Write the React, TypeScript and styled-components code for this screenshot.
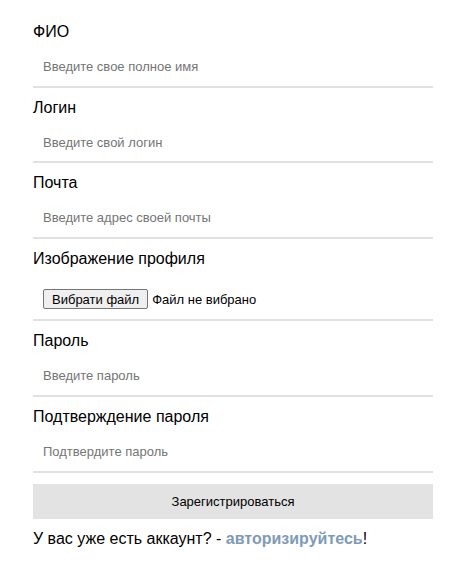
import React, { useState } from 'react';
import styled, { createGlobalStyle } from 'styled-components';

const GlobalStyle = createGlobalStyle`
  body {
    margin: 0;
    background: #fff;
    font-family: "Liberation Sans", Arial, sans-serif;
    color: #000;
  }
`;

const Form = styled.form`
  width: 400px;
  padding: 23px 0 0 33px;
  display: flex;
  flex-direction: column;
`;

const Field = styled.div`
  display: flex;
  flex-direction: column;
  margin-bottom: 11px;
`;

const Label = styled.label`
  font-size: 16px;
  line-height: 18.6px;
  margin-bottom: 6px;
`;

const Input = styled.input`
  box-sizing: border-box;
  width: 100%;
  height: 40px;
  padding: 0 10px;
  border: none;
  border-bottom: 2px solid #e1e1e1;
  outline: none;
  font-family: "Liberation Sans", Arial, sans-serif;
  font-size: 13px;
  color: #000;
  background: transparent;

  &::placeholder {
    color: #757575;
  }
`;

const FileRow = styled.div`
  box-sizing: border-box;
  height: 47px;
  padding: 5px 10px 0;
  display: flex;
  align-items: center;
  gap: 4px;
  border-bottom: 2px solid #e1e1e1;
  font-size: 13px;
`;

const HiddenFile = styled.input`
  display: none;
`;

const FileButton = styled.label`
  box-sizing: border-box;
  height: 20px;
  padding: 0 8px;
  display: inline-flex;
  align-items: center;
  border: 1px solid #767676;
  border-radius: 2px;
  background: #efefef;
  font-size: 13px;
  color: #000;
  cursor: default;
`;

const FileName = styled.span`
  font-size: 13px;
`;

const Submit = styled.button`
  margin-top: 0;
  height: 35px;
  border: none;
  background: #e3e3e3;
  font-family: "Liberation Sans", Arial, sans-serif;
  font-size: 13px;
  color: #000;
  cursor: pointer;
`;

const Footer = styled.p`
  margin: 11px 0 0;
  font-size: 16px;
  line-height: 18.6px;
`;

const Link = styled.a`
  color: #7e9ab8;
  font-weight: bold;
  text-decoration: none;
`;

const fields = [
  { id: 'fio', label: 'ФИО', placeholder: 'Введите свое полное имя', type: 'text' },
  { id: 'login', label: 'Логин', placeholder: 'Введите свой логин', type: 'text' },
  { id: 'email', label: 'Почта', placeholder: 'Введите адрес своей почты', type: 'email' },
  { id: 'avatar', label: 'Изображение профиля', placeholder: '', type: 'file' },
  { id: 'password', label: 'Пароль', placeholder: 'Введите пароль', type: 'password' },
  { id: 'confirm', label: 'Подтверждение пароля', placeholder: 'Подтвердите пароль', type: 'password' },
];

export default function App() {
  const [fileName, setFileName] = useState('');

  return (
    <>
      <GlobalStyle />
      <Form onSubmit={(e) => e.preventDefault()}>
        {fields.map((f) => (
          <Field key={f.id}>
            <Label htmlFor={f.id}>{f.label}</Label>
            {f.type === 'file' ? (
              <FileRow>
                <HiddenFile
                  id={f.id}
                  type="file"
                  onChange={(e) => setFileName(e.target.files?.[0]?.name ?? '')}
                />
                <FileButton htmlFor={f.id}>Вибрати файл</FileButton>
                <FileName>{fileName || 'Файл не вибрано'}</FileName>
              </FileRow>
            ) : (
              <Input id={f.id} type={f.type} placeholder={f.placeholder} />
            )}
          </Field>
        ))}
        <Submit type="submit">Зарегистрироваться</Submit>
        <Footer>
          У вас уже есть аккаунт? - <Link href="#">авторизируйтесь</Link>!
        </Footer>
      </Form>
    </>
  );
}
